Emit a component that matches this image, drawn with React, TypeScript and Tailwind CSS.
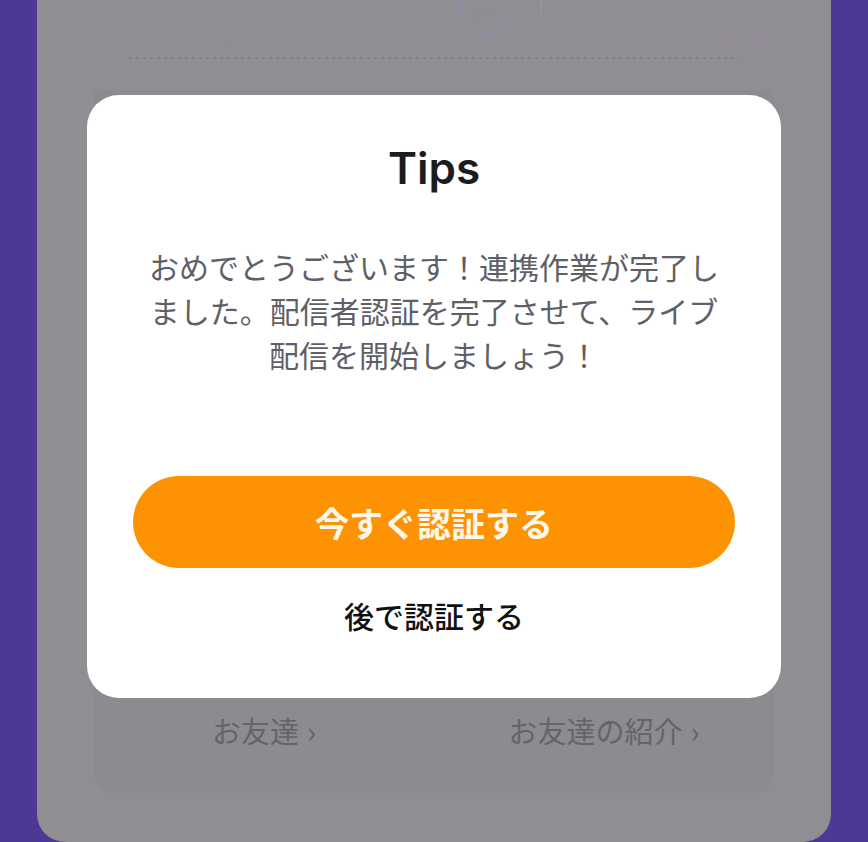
import React from 'react';

const jp = { fontFamily: '"Noto Sans CJK JP", "Noto Sans", sans-serif' };

const FriendLink = ({ label }: { label: string }) => (
  <div className="flex items-center justify-center gap-2 text-[29px] leading-[40px] text-[#65646b]" style={jp}>
    <span>{label}</span>
    <span className="text-[30px] leading-none">›</span>
  </div>
);

const TipsModal: React.FC = () => (
  <div className="absolute left-[87px] top-[95px] w-[694px] h-[603px] rounded-[32px] bg-white flex flex-col items-center pt-[47px]">
    <h1
      className="text-[44px] leading-[52px] font-semibold text-[#1c1c1e]"
      style={{ fontFamily: 'Inter, "Liberation Sans", sans-serif' }}
    >
      Tips
    </h1>
    <p
      className="mt-[50px] w-[580px] text-center text-[30px] leading-[44px] text-[#5e5f67]"
      style={jp}
    >
      おめでとうございます！連携作業が完了しました。配信者認証を完了させて、ライブ配信を開始しましょう！
    </p>
    <button
      className="mt-[100px] w-[602px] h-[92px] rounded-full bg-[#fd9302] text-[34px] font-semibold text-[#fff8ea] flex items-center justify-center"
      style={jp}
    >
      今すぐ認証する
    </button>
    <button className="mt-[27px] h-[40px] text-[30px] leading-[40px] font-medium text-[#111111]" style={jp}>
      後で認証する
    </button>
  </div>
);

export default function App() {
  return (
    <div className="relative h-[842px] w-full overflow-hidden bg-[#4e3896] flex px-[37px]">
      {/* dimmed page card */}
      <div className="flex-1 h-full rounded-b-[28px] bg-[#8f8e92] px-[57px] pb-[49px] flex">
        <div className="flex-1 rounded-b-[20px] bg-[#8c8b90] flex flex-col">
          <div className="relative h-[90px] bg-[#8f8e93]">
            <svg className="absolute left-0 top-0" width="680" height="90" viewBox="0 0 680 90" fill="none">
              <ellipse cx="390" cy="8" rx="25" ry="28" stroke="#9a8aa6" strokeWidth="2.5" opacity="0.75" />
              <path d="M380 16 l8 -6 l8 4" stroke="#a08299" strokeWidth="2" opacity="0.6" />
              <path d="M447 0 v14" stroke="#9a97a2" strokeWidth="2" opacity="0.6" />
              <path d="M103 58 C103 34, 150 30, 152 56" stroke="#9c88a4" strokeWidth="2.5" opacity="0.7" />
              <path d="M620 58 C622 32, 668 30, 675 50" stroke="#9c88a4" strokeWidth="2.5" opacity="0.7" />
              <line x1="35" y1="58" x2="645" y2="58" stroke="#7f7e8a" strokeWidth="2" strokeDasharray="3 4" />
            </svg>
          </div>
          <div className="h-[620px]" />
          <div className="grid grid-cols-2">
            <FriendLink label="お友達" />
            <FriendLink label="お友達の紹介" />
          </div>
        </div>
      </div>
      <TipsModal />
    </div>
  );
}
